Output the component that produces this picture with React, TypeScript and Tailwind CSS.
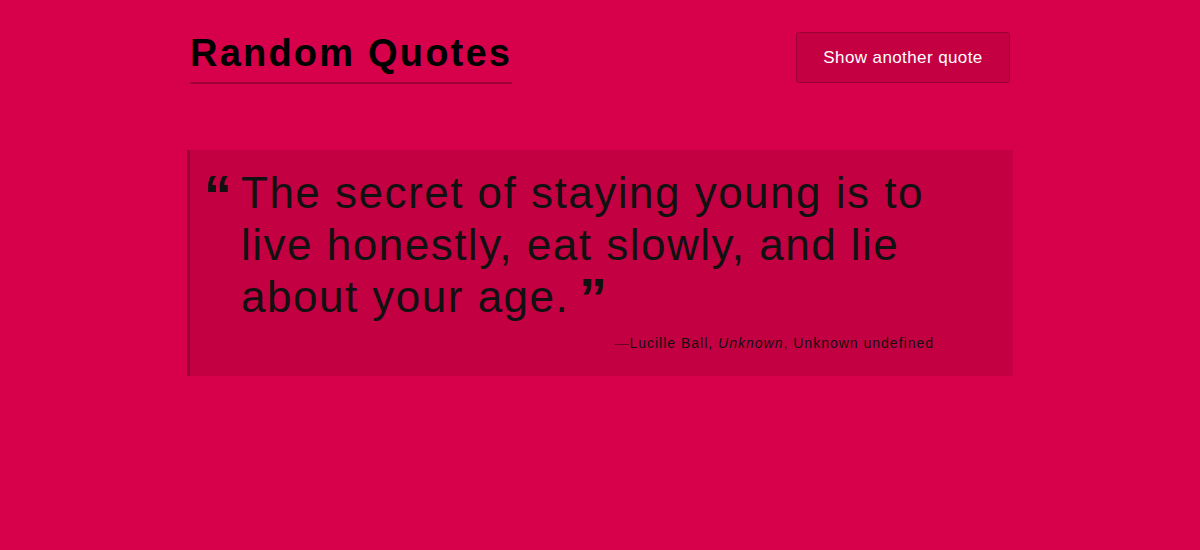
export default function App() {
  return (
    <div className="min-h-[550px] w-full bg-[#d7004a] font-['Liberation_Sans',Arial,sans-serif] text-[#111]">
      <div className="mx-auto w-[826px] pt-8">
        {/* Header */}
        <header className="flex items-start justify-between">
          <h1 className="ml-[3px] inline-block border-b-2 border-[#9e0036] pb-[7px] text-[38px] font-bold leading-[43px] tracking-[2.2px] text-black">
            Random Quotes
          </h1>
          <button className="mr-[3px] h-[51px] w-[214px] rounded-[3px] border border-[#9b0035] bg-[#c40043] text-[17px] tracking-[0.4px] text-white">
            Show another quote
          </button>
        </header>

        {/* Quote */}
        <blockquote className="mt-[66px] border-l-[3px] border-[#9a0036] bg-[#c30042] pt-[17px] pr-[70px] pb-[23px] pl-[14px]">
          <div className="flex">
            <span className="relative top-[2px] h-[52px] w-[37px] shrink-0 text-[56px] font-bold leading-[52px]">
              “
            </span>
            <p className="text-[44px] leading-[52px] tracking-[1.5px]">
              The secret of staying young is to live honestly, eat slowly, and lie about your age.
              <span className="relative top-[3px] ml-[10px] inline-block h-[48px] align-top text-[56px] font-bold leading-[48px] tracking-normal">”</span>
            </p>
          </div>
          <footer className="mt-[10px] mr-[9px] text-right text-[14px] leading-[20px] tracking-[1px]">
            <span className="text-[#6e0026]">—</span>Lucille Ball, <cite className="italic">Unknown</cite>, Unknown undefined
          </footer>
        </blockquote>
      </div>
    </div>
  );
}
